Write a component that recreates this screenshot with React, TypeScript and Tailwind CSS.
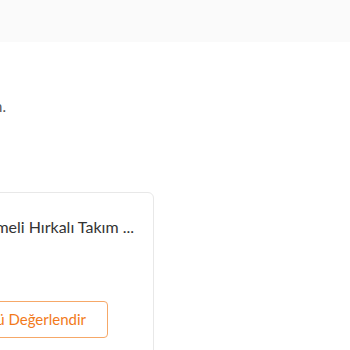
import React from "react";

function App() {
	return (
		<div className="w-[350px] h-[350px] overflow-hidden bg-white font-['Lato',sans-serif]">
			{/* top bar */}
			<div className="h-[42px] bg-[#fafafa]" />

			{/* section title, scrolled off to the left */}
			<div className="h-[150px] pt-[54px]">
				<div className="-ml-[200px] w-[206px] text-right whitespace-nowrap text-[15px] leading-[20px] text-[#555]">
					Siparişlerim.
				</div>
			</div>

			{/* order card */}
			<div className="-ml-[200px] w-[354px] h-[200px] rounded-md border border-[#e8e8e8]">
				<div className="pt-[24px] pr-[19px] text-right whitespace-nowrap text-[16px] leading-[20px] text-[#333]">
					Kadın Siyah Örme Düğmeli Hırkalı Takım ...
				</div>
				<div className="mt-[64px] flex justify-end pr-[45px]">
					<button className="h-[37px] rounded-[4px] border border-[#f6a868] bg-white pl-[22px] pr-[21px] text-[15px] text-[#f27a1a] whitespace-nowrap">
						Ürünü Değerlendir
					</button>
				</div>
			</div>
		</div>
	);
}

export default App;
